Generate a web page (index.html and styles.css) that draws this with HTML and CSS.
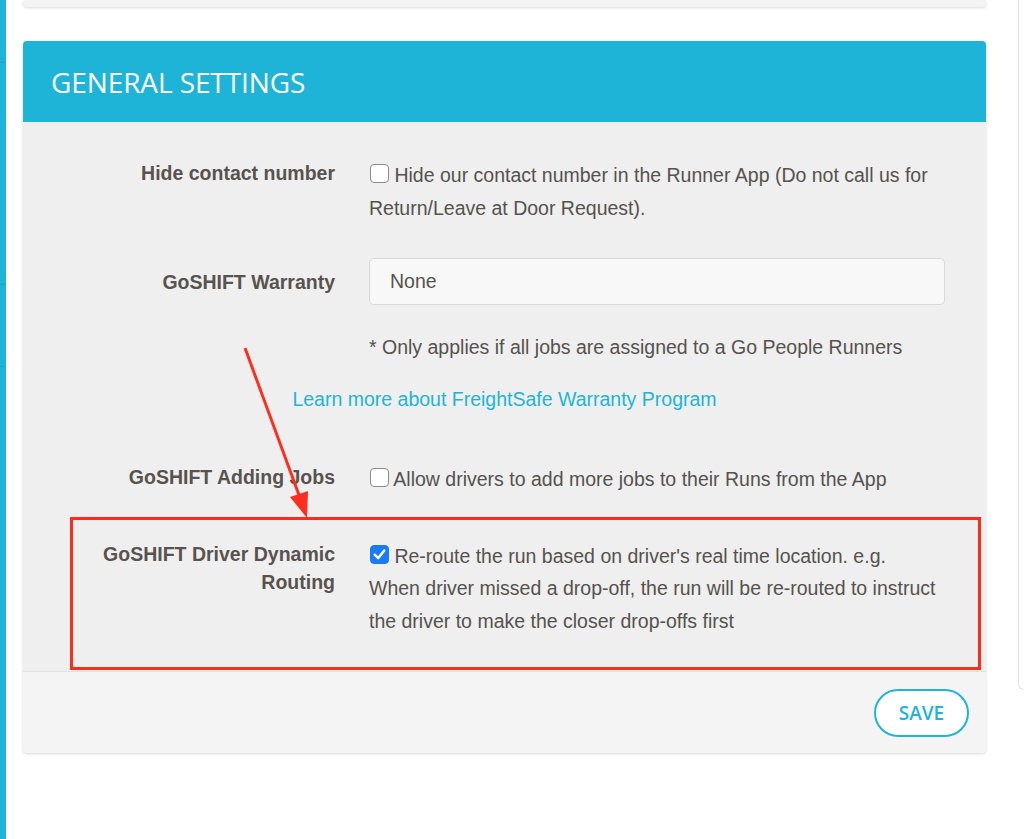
FILE: index.html
```html
<!DOCTYPE html>
<html lang="en">
<head>
    <meta charset="UTF-8">
    <meta name="viewport" content="width=device-width, initial-scale=1.0">
    <title>General Settings</title>
    <link rel="stylesheet" href="styles.css">
</head>
<body>
    <div class="layout">
        <aside class="sidebar">
            <div class="sidebar-item item-top"></div>
            <div class="sidebar-item item-mid"></div>
            <div class="sidebar-item item-low"></div>
        </aside>

        <main class="content">
            <div class="card card-top"></div>

            <section class="card settings">
                <header class="card-header">
                    <h2>GENERAL SETTINGS</h2>
                </header>

                <div class="card-body">
                    <div class="field">
                        <label class="field-label">Hide contact number</label>
                        <p class="field-text"><span class="checkbox"></span> Hide our contact number in the Runner App (Do not call us for Return/Leave at Door Request).</p>
                    </div>

                    <div class="field field-center">
                        <label class="field-label">GoSHIFT Warranty</label>
                        <div class="select">None</div>
                    </div>

                    <p class="note">* Only applies if all jobs are assigned to a Go People Runners</p>

                    <a href="#" class="learn-link">Learn more about FreightSafe Warranty Program</a>

                    <div class="field field-jobs">
                        <label class="field-label">GoSHIFT Adding Jobs</label>
                        <p class="field-text"><span class="checkbox"></span> Allow drivers to add more jobs to their Runs from the App</p>
                    </div>

                    <div class="field field-routing">
                        <label class="field-label">GoSHIFT Driver Dynamic<br>Routing</label>
                        <p class="field-text"><span class="checkbox checked"><svg viewBox="0 0 20 20" width="19" height="19"><path d="M5 10.2 L8.6 13.8 L15 5.8" fill="none" stroke="#fff" stroke-width="2.6" stroke-linecap="round" stroke-linejoin="round"/></svg></span> Re-route the run based on driver's real time location. e.g.<br>When driver missed a drop-off, the run will be re-routed to instruct the driver to make the closer drop-offs first</p>
                    </div>
                </div>

                <footer class="card-footer">
                    <button class="btn-save">SAVE</button>
                </footer>

                <!-- annotation drawn over the screenshot -->
                <div class="highlight"></div>
                <svg class="arrow" width="90" height="180" viewBox="0 0 90 180">
                    <line x1="12" y1="7" x2="66" y2="154" stroke="#ff2d1f" stroke-width="3"/>
                    <polygon points="74,177 57,156 75,150" fill="#ff2d1f"/>
                </svg>
            </section>
        </main>

        <div class="side-panel"></div>
    </div>
</body>
</html>
```

FILE: styles.css
```css
body {
    margin: 0;
    font-family: "Liberation Sans", Arial, sans-serif;
    background: #fff;
    color: #56524d;
    height: 839px;
    overflow: hidden;
}
.layout {
    display: flex;
    height: 839px;
}
.sidebar {
    width: 6px;
    background: #1eb4d8;
    flex-shrink: 0;
}
.sidebar-item {
    border-bottom: 1px solid rgba(0, 0, 0, 0.08);
}
.item-top {
    height: 62px;
}
.item-mid {
    height: 221px;
}
.item-low {
    height: 81px;
}
.content {
    flex: 1;
    padding: 0 32px 0 17px;
}
.card {
    background: #f3f3f3;
    border-radius: 4px;
    box-shadow: 0 1px 3px rgba(0, 0, 0, 0.15);
}
.card-top {
    height: 7px;
    border-radius: 0 0 4px 4px;
    margin-bottom: 34px;
}
.settings {
    position: relative;
}
.card-header {
    height: 81px;
    background: #1eb4d8;
    border-radius: 4px 4px 0 0;
    padding-left: 28px;
    display: flex;
    align-items: center;
}
.card-header h2 {
    margin: 0;
    color: #fff;
    font-family: "Open Sans", sans-serif;
    font-weight: 500;
    font-size: 28px;
    letter-spacing: -0.1px;
}
.card-body {
    background: #efefef;
    padding: 37px 0 34px;
}
.field {
    display: grid;
    grid-template-columns: 312px 576px;
    column-gap: 34px;
    align-items: start;
}
.field-center {
    align-items: center;
    margin-top: 34px;
}
.field-jobs {
    margin-top: 48px;
}
.field-routing {
    margin-top: 44px;
}
.field-label {
    text-align: right;
    font-weight: bold;
    font-size: 19.5px;
    line-height: 28px;
    color: #58534e;
}
.field-text {
    margin: 0;
    font-size: 19.5px;
    line-height: 32.5px;
}
.checkbox {
    display: inline-block;
    box-sizing: border-box;
    width: 19px;
    height: 19px;
    margin-left: 1px;
    border: 1px solid #8b8b8b;
    border-radius: 4px;
    background: #fff;
    vertical-align: -1px;
}
.checkbox svg {
    display: block;
    margin: -1px;
}
.checkbox.checked {
    background: #1a7cf3;
    border-color: #1a7cf3;
}
.select {
    height: 47px;
    box-sizing: border-box;
    border: 1px solid #d9d9d9;
    border-radius: 5px;
    background: #f8f8f8;
    padding: 0 20px;
    font-size: 19.5px;
    line-height: 45px;
}
.note {
    margin: 26px 0 0 346px;
    font-size: 19.5px;
    line-height: 32px;
}
.learn-link {
    display: block;
    margin-top: 20px;
    text-align: center;
    font-size: 19.5px;
    line-height: 32px;
    color: #1eb4d8;
    text-decoration: none;
}
.card-footer {
    background: #f4f4f4;
    border-top: 1px solid #e2e2e2;
    border-radius: 0 0 4px 4px;
    padding: 17px 17px 16px;
    display: flex;
    justify-content: flex-end;
}
.btn-save {
    width: 95px;
    height: 48px;
    border: 2px solid #1eb4d8;
    border-radius: 24px;
    background: #fff;
    color: #1eb4d8;
    font-family: "Open Sans", sans-serif;
    font-weight: 600;
    font-size: 19px;
    cursor: pointer;
}
.highlight {
    position: absolute;
    left: 47px;
    top: 476px;
    width: 911px;
    height: 153px;
    box-sizing: border-box;
    border: 3px solid #ff2b1c;
}
.arrow {
    position: absolute;
    left: 210px;
    top: 300px;
}
.side-panel {
    width: 6px;
    height: 690px;
    flex-shrink: 0;
    box-sizing: border-box;
    border-left: 1px solid #e3e3e3;
    border-bottom: 1px solid #e3e3e3;
    border-bottom-left-radius: 6px;
}
```
